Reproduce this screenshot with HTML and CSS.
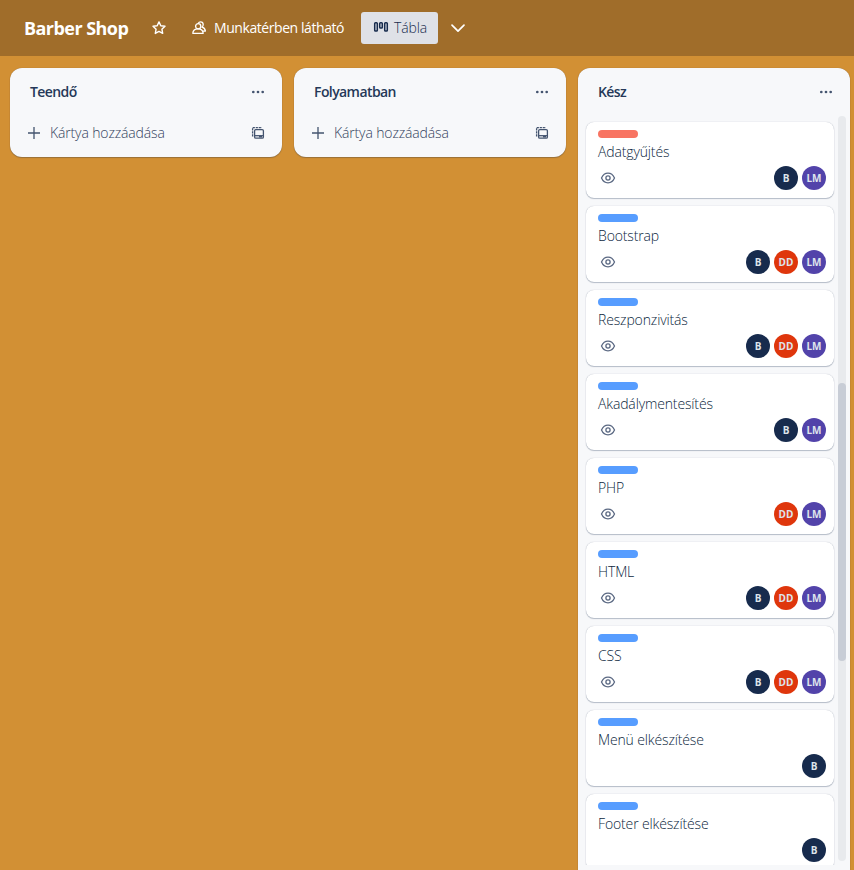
FILE: index.html
```
<!DOCTYPE html>
<html lang="hu">
<head>
<meta charset="utf-8">
<title>Barber Shop</title>
<link rel="stylesheet" href="styles.css">
</head>
<body>
<svg class="sprite" aria-hidden="true">
  <symbol id="eye" viewBox="0 0 16 16"><g fill="none" stroke="currentColor" stroke-width="1.3"><path d="M1.500 8C3 4.700 5.200 3.200 8 3.200S13 4.700 14.500 8C13 11.300 10.800 12.800 8 12.800S3 11.300 1.500 8Z"/><circle cx="8" cy="8" r="2.100"/></g></symbol>
  <symbol id="dots" viewBox="0 0 16 16"><g fill="currentColor"><circle cx="3.300" cy="8" r="1.350"/><circle cx="8" cy="8" r="1.350"/><circle cx="12.700" cy="8" r="1.350"/></g></symbol>
  <symbol id="plus" viewBox="0 0 16 16"><path d="M8 2v12M2 8h12" fill="none" stroke="currentColor" stroke-width="1.300"/></symbol>
  <symbol id="template" viewBox="0 0 16 16"><g fill="none" stroke="currentColor" stroke-width="1.300"><path d="M2.600 11.500V2.600H12" stroke-dasharray="2.200 .8"/><rect x="4.600" y="4.600" width="8.800" height="8.600" rx="1.200"/><path d="M4.600 10.700h8.800"/></g><path d="M9 11h3v1.500H9z" fill="currentColor"/></symbol>
</svg>
<header class="topbar">
  <h1>Barber Shop</h1>
  <svg class="star" viewBox="0 0 16 16"><path d="M8 1.900l1.800 3.900 4.200.5-3.100 2.900.8 4.200L8 11.400l-3.700 2 .8-4.200L2 6.300l4.200-.5z" fill="none" stroke="currentColor" stroke-width="1.400" stroke-linejoin="round"/></svg>
  <div class="visibility">
    <svg class="icon" viewBox="0 0 16 16"><g fill="none" stroke="currentColor" stroke-width="1.300" stroke-linejoin="round"><circle cx="7.200" cy="6.300" r="2.600"/><path d="M1.800 13.300c.2-2.700 2-4.400 5.200-4.400s5 1.700 5.200 4.400z"/><path d="M7.300 3.200c.5-1 1.300-1.300 2.200-1.300 1.700 0 2.700 1.200 2.700 2.700 0 1-.4 1.900-1.200 2.500 2 .5 3.200 1.900 3.400 4h-2.600"/></g></svg>
    <span>Munkatérben látható</span>
  </div>
  <div class="view">
    <svg class="icon" viewBox="0 0 16 16"><g fill="none" stroke="currentColor" stroke-width="1.500"><rect x="1.700" y="2.700" width="2.600" height="8.400" rx=".8"/><rect x="6.700" y="2.700" width="2.600" height="5.400" rx=".8"/><rect x="11.700" y="2.700" width="2.600" height="8.400" rx=".8"/></g></svg>
    <span>Tábla</span>
  </div>
  <svg class="chevron" viewBox="0 0 16 16"><path d="M2 5.200L8 11.200 14 5.200" fill="none" stroke="currentColor" stroke-width="1.700" stroke-linecap="round" stroke-linejoin="round"/></svg>
</header>
<main class="board">
  <section class="list">
    <div class="list-head"><h2>Teendő</h2><svg class="icon"><use href="#dots"/></svg></div>
    <div class="add"><svg class="icon"><use href="#plus"/></svg><span>Kártya hozzáadása</span><svg class="icon"><use href="#template"/></svg></div>
  </section>
  <section class="list">
    <div class="list-head"><h2>Folyamatban</h2><svg class="icon"><use href="#dots"/></svg></div>
    <div class="add"><svg class="icon"><use href="#plus"/></svg><span>Kártya hozzáadása</span><svg class="icon"><use href="#template"/></svg></div>
  </section>
  <section class="list tall">
    <div class="list-head"><h2>Kész</h2><svg class="icon"><use href="#dots"/></svg></div>
    <div class="scroller">
      <div class="cards">
        <article class="card"><i class="label red"></i><p>Adatgyűjtés</p><div class="meta"><svg class="icon"><use href="#eye"/></svg><b class="av navy">B</b><b class="av purple">LM</b></div></article>
        <article class="card"><i class="label"></i><p>Bootstrap</p><div class="meta"><svg class="icon"><use href="#eye"/></svg><b class="av navy">B</b><b class="av orange">DD</b><b class="av purple">LM</b></div></article>
        <article class="card"><i class="label"></i><p>Reszponzivitás</p><div class="meta"><svg class="icon"><use href="#eye"/></svg><b class="av navy">B</b><b class="av orange">DD</b><b class="av purple">LM</b></div></article>
        <article class="card"><i class="label"></i><p>Akadálymentesítés</p><div class="meta"><svg class="icon"><use href="#eye"/></svg><b class="av navy">B</b><b class="av purple">LM</b></div></article>
        <article class="card"><i class="label"></i><p>PHP</p><div class="meta"><svg class="icon"><use href="#eye"/></svg><b class="av orange">DD</b><b class="av purple">LM</b></div></article>
        <article class="card"><i class="label"></i><p>HTML</p><div class="meta"><svg class="icon"><use href="#eye"/></svg><b class="av navy">B</b><b class="av orange">DD</b><b class="av purple">LM</b></div></article>
        <article class="card"><i class="label"></i><p>CSS</p><div class="meta"><svg class="icon"><use href="#eye"/></svg><b class="av navy">B</b><b class="av orange">DD</b><b class="av purple">LM</b></div></article>
        <article class="card"><i class="label"></i><p>Menü elkészítése</p><div class="meta"><b class="av navy">B</b></div></article>
        <article class="card"><i class="label"></i><p>Footer elkészítése</p><div class="meta"><b class="av navy">B</b></div></article>
      </div>
      <div class="track"><div class="thumb"></div></div>
    </div>
  </section>
</main>
</body>
</html>
```
FILE: styles.css
```
* { box-sizing: border-box; margin: 0; padding: 0; }
body {
  height: 870px;
  overflow: hidden;
  background: #d29034;
  color: #172b4d;
  font: 300 14px/20px "Open Sans", sans-serif;
  letter-spacing: -0.14px;
}
svg { display: block; flex: none; }
.sprite { display: none; }
.icon { width: 16px; height: 16px; }
.topbar {
  display: flex;
  align-items: center;
  height: 56px;
  padding-left: 24px;
  background: #a06d2a;
  color: #fff;
  white-space: nowrap;
}
h1 { width: 105px; font-size: 18px; line-height: 32px; font-weight: 700; letter-spacing: -0.55px; }
.star { width: 16px; height: 16px; margin-left: 22px; }
.visibility { display: flex; align-items: center; gap: 8px; width: 154px; margin-left: 24px; font-weight: 500; letter-spacing: -0.43px; }
.visibility .icon { margin-right: -1px; }
.view {
  display: flex;
  align-items: center;
  gap: 5px;
  width: 77px;
  height: 32px;
  margin-left: 16px;
  padding-left: 12px;
  border-radius: 3px;
  background: #dfe1e7;
  color: #172b4d;
}
.chevron { width: 16px; height: 16px; margin-left: 12px; }
.board { display: flex; align-items: flex-start; gap: 12px; padding: 12px 0 0 10px; }
.list {
  flex: none;
  width: 272px;
  height: 89px;
  border-radius: 12px;
  background: #f7f8fa;
  box-shadow: 0 1px 1px #091e4240, 0 0 1px #091e424f;
}
.list.tall { height: 820px; }
.list-head {
  display: flex;
  align-items: center;
  justify-content: space-between;
  height: 48px;
  padding: 0 16px 0 20px;
  color: #44546f;
}
h2 { font-size: 14px; line-height: 20px; font-weight: 600; letter-spacing: -0.58px; color: #253858; }
.add { display: flex; align-items: center; height: 34px; padding: 0 16px; color: #44546f; }
.add span { flex: 1; margin-left: 8px; color: #34435e; }
.scroller { display: flex; height: 749px; overflow: hidden; }
.cards { display: flex; flex-direction: column; gap: 8px; width: 260px; padding: 6px 4px 0 8px; }
.card {
  flex: none;
  height: 76px;
  padding: 8px 8px 8px 12px;
  border-radius: 8px;
  background: #fff;
  box-shadow: 0 1px 1px #091e4240, 0 0 1px #091e424f;
}
.card p { color: #0c1f40; }
.label { display: block; width: 40px; height: 8px; margin-bottom: 4px; border-radius: 4px; background: #579dff; }
.label.red { background: #f87462; }
.meta { display: flex; align-items: center; justify-content: flex-end; gap: 4px; height: 24px; margin-top: 4px; }
.meta .icon { margin: 0 auto 0 2px; color: #5a6882; }
.av {
  width: 24px;
  height: 24px;
  border-radius: 50%;
  color: #dee4ec;
  font-size: 10px;
  line-height: 24px;
  font-weight: 700;
  letter-spacing: 0;
  text-align: center;
}
.navy { background: #172b4d; }
.orange { background: #df360c; }
.purple { background: #5243aa; }
.track { width: 8px; height: 745px; padding-top: 267px; border-radius: 4px; background: #e8eaed; }
.thumb { height: 278px; border-radius: 4px; background: #c8cdd6; }
```
